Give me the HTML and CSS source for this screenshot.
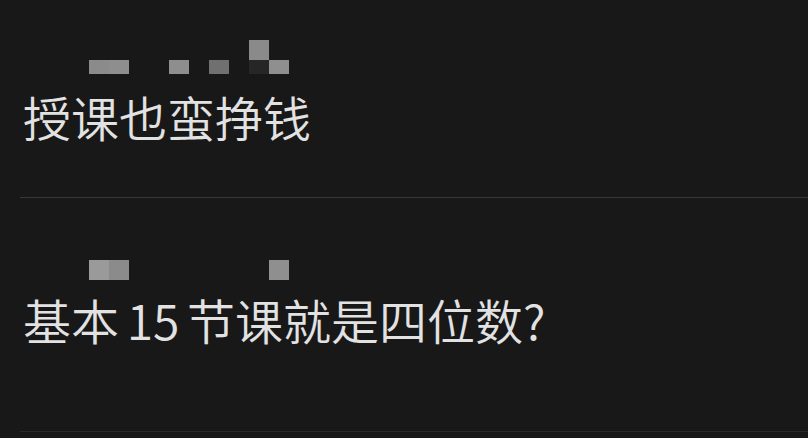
FILE: index.html
```html
<!DOCTYPE html>
<html lang="zh-CN">
<head>
  <meta charset="UTF-8">
  <meta name="viewport" content="width=device-width, initial-scale=1.0">
  <title>评论</title>
  <link rel="stylesheet" href="styles.css">
</head>
<body>

<div class="comment-list">

  <!-- Comment 1 -->
  <div class="comment first">
    <div class="mosaic name-a">
      <span class="cell" style="grid-area: 1 / 9; background: #8a8a8a;"></span>
      <span class="cell" style="grid-area: 2 / 1; background: #8b8b8b;"></span>
      <span class="cell" style="grid-area: 2 / 2; background: #8e8e8e;"></span>
      <span class="cell" style="grid-area: 2 / 5; background: #8e8e8e;"></span>
      <span class="cell" style="grid-area: 2 / 7; background: #707070;"></span>
      <span class="cell" style="grid-area: 2 / 9; background: #262626;"></span>
      <span class="cell" style="grid-area: 2 / 10; background: #8f8f8f;"></span>
    </div>
    <p class="comment-text">授课也蛮挣钱</p>
  </div>

  <!-- Comment 2 -->
  <div class="comment second">
    <div class="mosaic name-b">
      <span class="cell" style="grid-area: 1 / 1; background: #9a9a9a;"></span>
      <span class="cell" style="grid-area: 1 / 2; background: #8b8b8b;"></span>
      <span class="cell" style="grid-area: 1 / 10; background: #8f8f8f;"></span>
    </div>
    <p class="comment-text">基本 15 节课就是四位数?</p>
  </div>

</div>

</body>
</html>
```

FILE: styles.css
```css
* { box-sizing: border-box; }

body, html {
  margin: 0;
  padding: 0;
  height: 100%;
  background-color: #181818;
  font-family: "Noto Sans CJK SC", "Noto Sans", sans-serif;
  color: #e2e2e2;
  overflow: hidden;
}

.comment-list {
  padding-left: 20px;
}

.comment {
  padding-left: 3px;
  border-bottom: 1px solid #383838;
}

.comment.first {
  padding-top: 40px;
  padding-bottom: 57px;
}

.comment.second {
  padding-top: 62px;
  padding-bottom: 88px;
  border-bottom-color: #2a2a2a;
}

/* pixelated user name */
.mosaic {
  display: grid;
  grid-template-columns: repeat(10, 20px);
  margin-left: 66px;
}

.name-a {
  grid-template-rows: 20px 14px;
  margin-bottom: 18px;
}

.name-b {
  grid-template-rows: 20px;
  margin-bottom: 15px;
}

.cell {
  display: block;
}

.comment-text {
  margin: 0;
  font-size: 48px;
  font-weight: 350;
  line-height: 48px;
  word-spacing: -3px;
  white-space: nowrap;
}
```
